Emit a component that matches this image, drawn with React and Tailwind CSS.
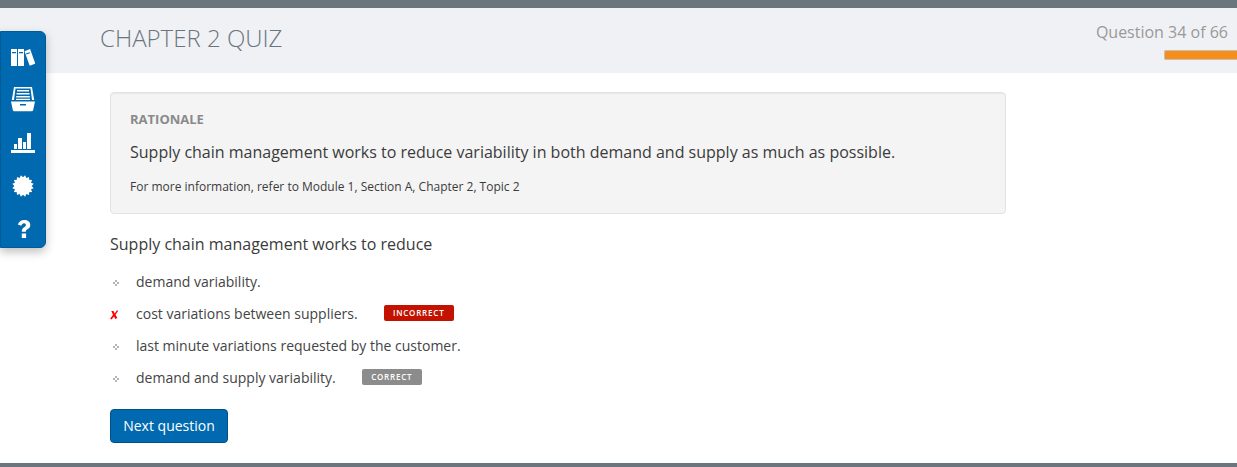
import React from "react";

function BooksIcon() {
  return (
    <svg className="block h-5 w-6" viewBox="0 0 24 20" fill="#fff">
      <path fillRule="evenodd" d="M0 1h6v17H0zM1 4h4v1.200H1z" />
      <path fillRule="evenodd" d="M7 1h6v17H7zM8 4h4v1.200H8z" />
      <path fillRule="evenodd" d="M13.500 3.200l5.600-2.200L24.300 15.600l-5.600 2.200zM15 5.500l.4 1.100 3.600-1.300-.4-1.100z" />
    </svg>
  );
}

function DrawerIcon() {
  return (
    <svg className="block h-[26px] w-6" viewBox="0 0 24 26" fill="#fff">
      <path d="M3 1h18l2.200 13h-2.200L19.500 2.500h-15L3 14H.8z" />
      <path d="M6 4h12v1.500H6zM5.500 7h13v1.500h-13zM5.200 10h13.600v1.500H5.200zM5 12.700h14v1.300H5z" />
      <path fillRule="evenodd" d="M0 15.500h24L22.200 24q-.2 1.300-1.500 1.300H3.300Q2 25.300 1.800 24zM9 18v1.500h6V18z" />
    </svg>
  );
}

function ChartIcon() {
  return (
    <svg className="block h-5 w-6" viewBox="0 0 24 20" fill="#fff">
      <path d="M0 17h24v3H0zM3 11h3v5H3zM7 5h4v11H7zM12 9h3v7h-3zM16 0h4v16h-4z" />
    </svg>
  );
}

function BadgeIcon() {
  const points = Array.from({ length: 32 }, (_, i) => {
    const r = i % 2 ? 8.7 : 10.9;
    const a = (i * Math.PI) / 16 + Math.PI / 16;
    return `${(11 + r * Math.sin(a)).toFixed(2)},${(11 - r * Math.cos(a)).toFixed(2)}`;
  }).join(" ");
  return (
    <svg className="block h-[22px] w-[22px]" viewBox="0 0 22 22">
      <polygon points={points} fill="#fff" />
    </svg>
  );
}

function HelpIcon() {
  return (
    <svg className="block h-[18px] w-[14px]" viewBox="0 0 14 18" fill="#fff">
      <path d="M.8 4.600C1.900 1.700 4 0 7.200 0c3.600 0 6.100 2 6.100 5 0 2.300-1.300 3.300-2.900 4.300-1.200.8-1.500 1.300-1.500 2.500H4.800c0-2.300.7-3.500 2.300-4.600C8.300 6.400 8.900 6 8.900 5c0-1-.7-1.700-1.900-1.700S4.900 4.200 4.300 5.800zM4.800 13.500h4.300V18H4.800z" />
    </svg>
  );
}

function Marker({ wrong }) {
  return (
    <span className="mt-[2px] block h-3 w-[26px] shrink-0">
      {wrong ? (
        <svg className="block" width="10" height="12" viewBox="0 0 10 12" fill="#f00">
          <path d="M1.300 2h2.200l1.200 2.500L7 1.300l1.200.5-2.700 4L7.400 9 5.300 10 4 7.400 1.500 10.500.1 9.800 3 5.800z" />
        </svg>
      ) : (
        <svg className="block" width="10" height="12" viewBox="0 0 10 12" fill="#b5b5b5">
          <path d="M5 3h2v2H5zM3 5h2v2H3zM7 5h2v2H7zM5 7h2v2H5z" />
        </svg>
      )}
    </span>
  );
}

function Answer({ children, wrong, tag }) {
  return (
    <li className="flex h-8 items-center">
      <Marker wrong={wrong} />
      <span className="text-[14px] leading-8 whitespace-nowrap text-[#444]">{children}</span>
      {tag}
    </li>
  );
}

export default function App() {
  return (
    <div className="relative flex h-[467px] flex-col overflow-hidden bg-white font-['Open_Sans',sans-serif] text-[#3b3b3b]">
      <div className="h-2 shrink-0 bg-[#6b757e]" />
      <header className="flex h-[65px] shrink-0 justify-between bg-[#f0f1f5] pl-[100px]">
        <h1 className="pt-[13px] text-[24px] leading-[34px] font-light whitespace-nowrap text-[#6b757e]">CHAPTER 2 QUIZ</h1>
        <div className="flex flex-col items-end">
          <p className="pt-3 pr-[9px] text-[16px] leading-6 whitespace-nowrap text-[#999]">Question 34 of 66</p>
          <div className="mt-[6px] h-[10px] w-[73px] rounded-l-[2px] border border-r-0 border-[#c4c0b4] bg-[#f68e1e]" />
        </div>
      </header>
      <main className="flex grow flex-col items-start pt-[19px] pl-[110px]">
        <section className="h-[122px] w-[896px] rounded-[4px] border border-[#e3e3e3] bg-[#f4f4f4] px-[19px] pt-4 shadow-[inset_0_1px_1px_rgba(0,0,0,0.05)]">
          <h2 className="text-[13px] leading-5 font-bold text-[#8a8a8a]">RATIONALE</h2>
          <p className="mt-[11px] text-[16px] leading-6 whitespace-nowrap">
            Supply chain management works to reduce variability in both demand and supply as much as possible.
          </p>
          <p className="mt-[13px] text-[12px] leading-5 whitespace-nowrap">
            For more information, refer to Module 1, Section A, Chapter 2, Topic 2
          </p>
        </section>
        <p className="mt-[18px] text-[16px] leading-6 whitespace-nowrap">Supply chain management works to reduce</p>
        <ul className="mt-[10px]">
          <Answer>demand variability.</Answer>
          <Answer
            wrong
            tag={
              <span className="mb-[2px] ml-[26px] flex h-4 w-[70px] items-center justify-center rounded-[2px] bg-[#c41200] text-[8px] font-semibold tracking-[0.8px] text-white">
                INCORRECT
              </span>
            }
          >
            cost variations between suppliers.
          </Answer>
          <Answer>last minute variations requested by the customer.</Answer>
          <Answer
            tag={
              <span className="mb-[2px] ml-[26px] flex h-4 w-[60px] items-center justify-center rounded-[2px] bg-[#8c8c8c] text-[8px] font-semibold tracking-[0.8px] text-white">
                CORRECT
              </span>
            }
          >
            demand and supply variability.
          </Answer>
        </ul>
        <button className="mt-[15px] h-[34px] w-[118px] rounded-[4px] border border-[#005187] bg-[#0069b0] text-[14px] leading-5 font-medium whitespace-nowrap text-white">
          Next question
        </button>
      </main>
      <div className="h-1 shrink-0 bg-[#6b757e]" />
      <nav className="absolute top-[31px] left-0 flex h-[217px] w-[46px] flex-col items-center rounded-r-[6px] border border-[#005c99] bg-[#0069b0] pt-4 shadow-[0_4px_10px_rgba(0,0,0,0.25)]">
        <BooksIcon />
        <div className="mt-[18px]"><DrawerIcon /></div>
        <div className="mt-[21px]"><ChartIcon /></div>
        <div className="mt-[22px]"><BadgeIcon /></div>
        <div className="mt-[23px] ml-[2px]"><HelpIcon /></div>
      </nav>
    </div>
  );
}
